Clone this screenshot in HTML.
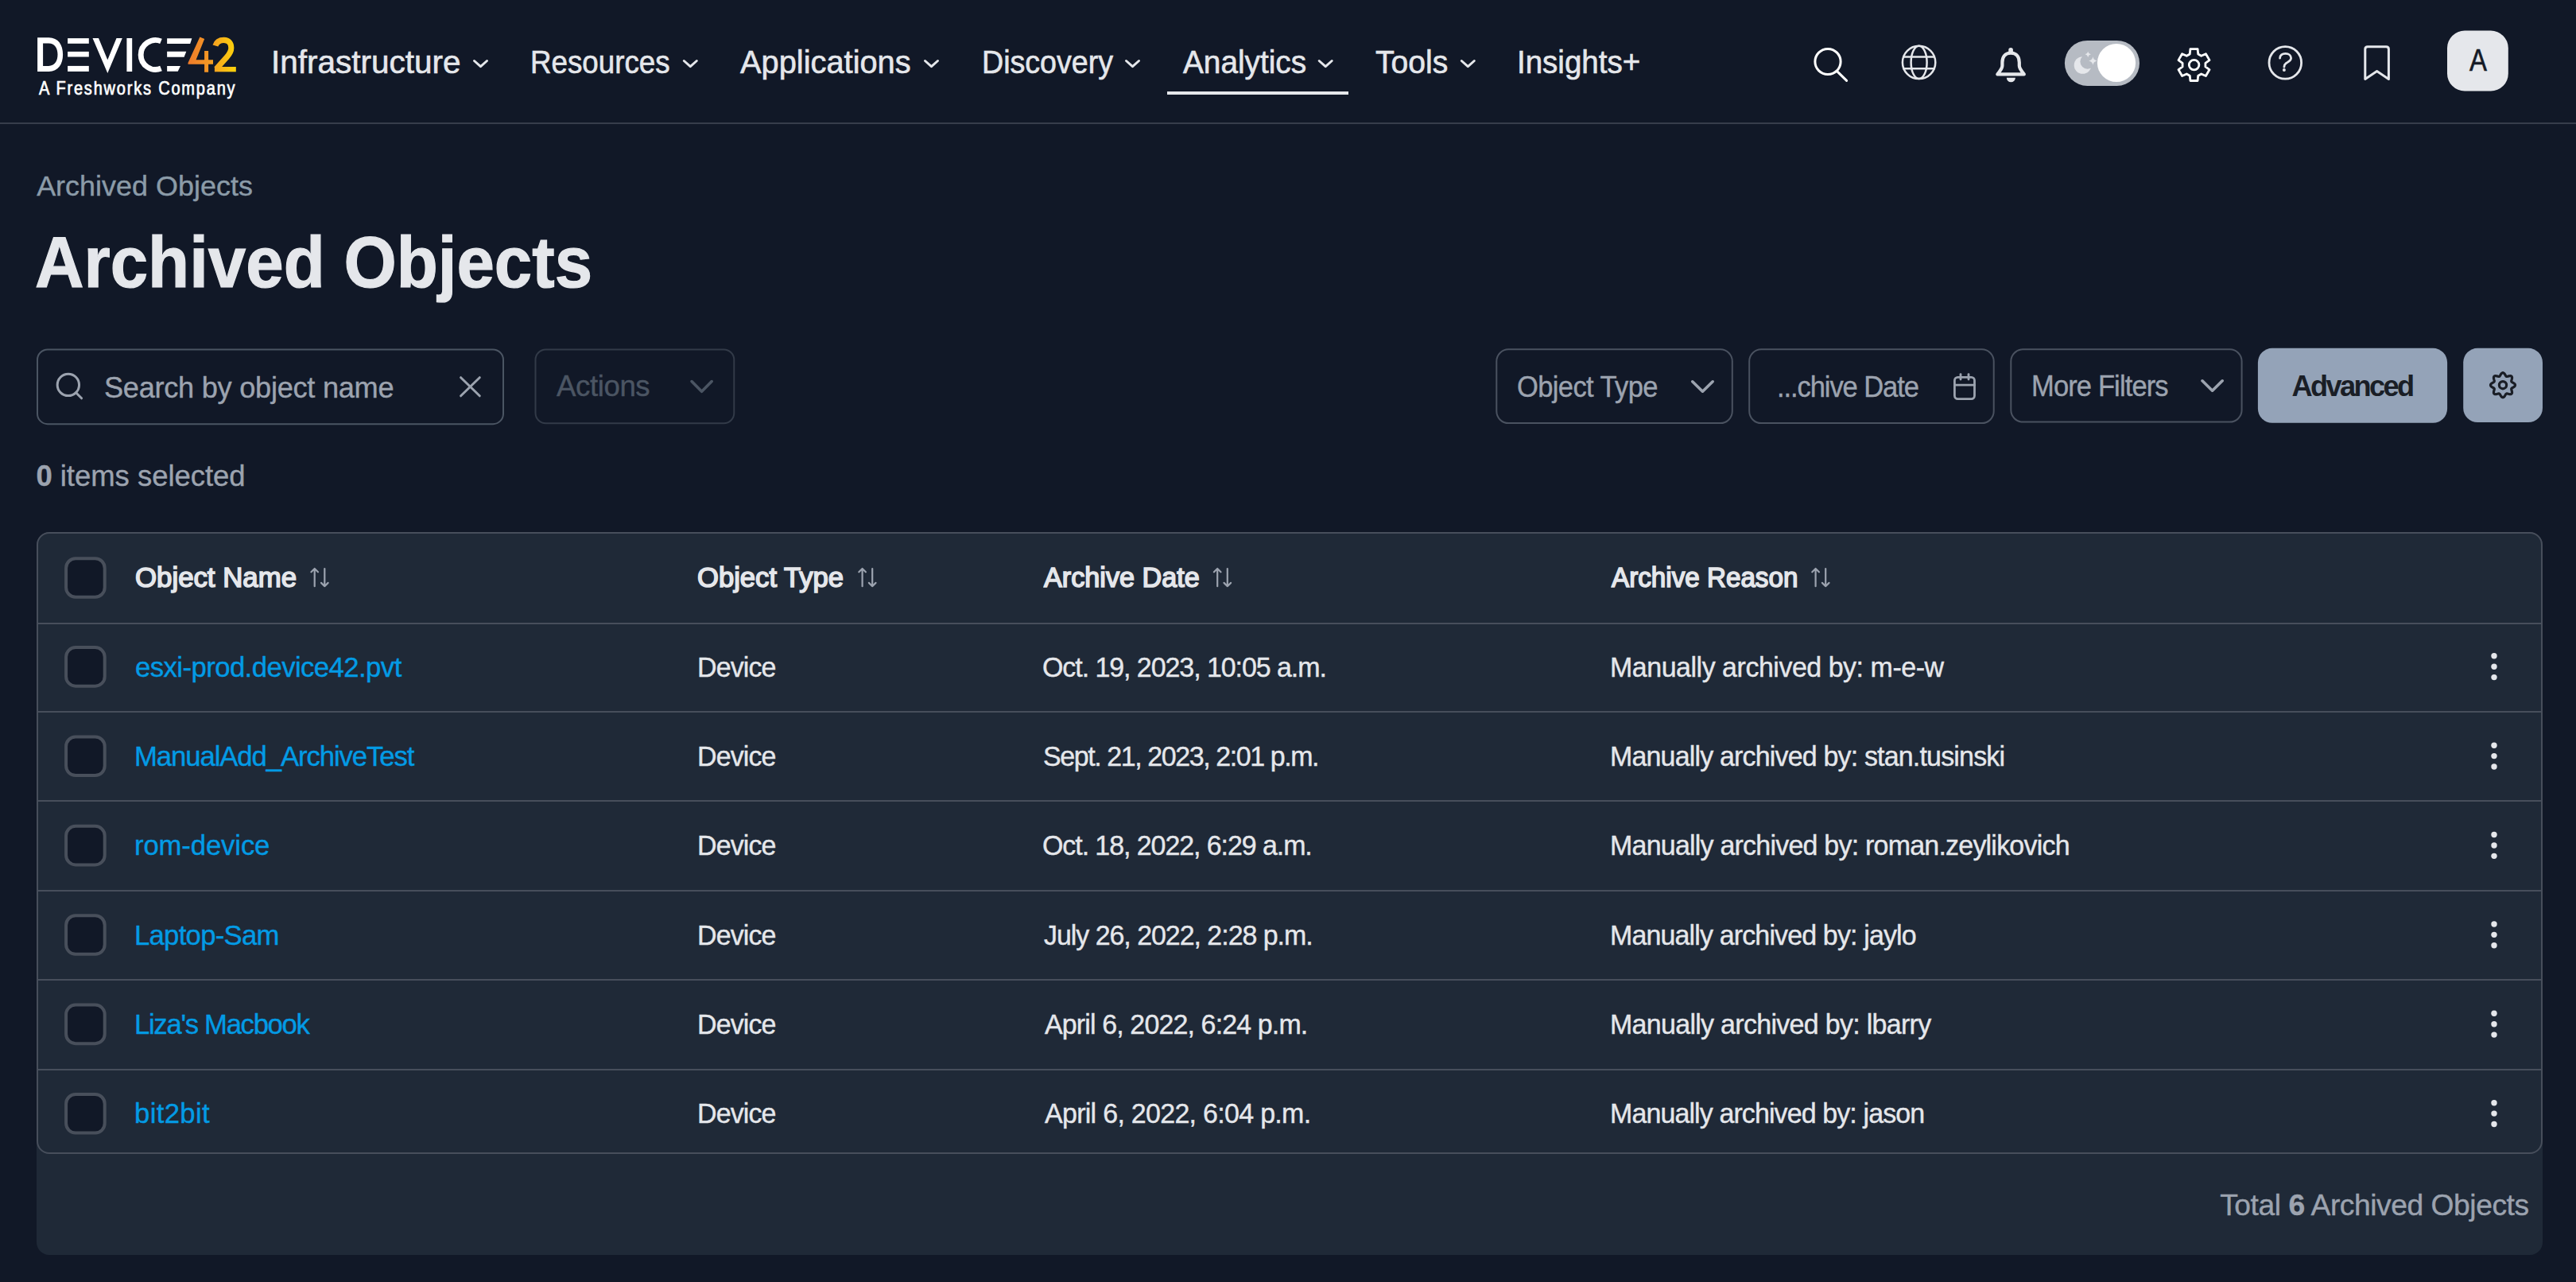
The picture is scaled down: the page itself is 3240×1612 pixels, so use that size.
<!DOCTYPE html>
<html><head><meta charset="utf-8"><title>Archived Objects</title>
<style>
html,body{margin:0;padding:0;background:#111827;width:3240px;height:1612px;overflow:hidden;}
.bg{position:absolute;left:0;top:0;}
.t{position:absolute;white-space:nowrap;font-family:"Liberation Sans",sans-serif;}
b{font-weight:700;}
</style></head><body>
<svg class="bg" width="3240" height="1612" viewBox="0 0 3240 1612"><rect x="0" y="154" width="3240" height="2" fill="#373d4b"/><rect x="1468" y="115" width="228" height="4" fill="#e5e7eb"/><g fill="#ffffff"><path fill-rule="evenodd" d="M47.1,47.3 H61.5 C73.2,47.3 79.1,56.5 79.1,68.6 C79.1,80.8 73.2,90 61.5,90 H47.1 Z M54.1,54.4 V82.9 H61.2 C68.6,82.9 72.5,77 72.5,68.6 C72.5,60.3 68.6,54.4 61.2,54.4 Z"/><rect x="85.1" y="48.1" width="26.7" height="6.7"/><rect x="85.1" y="64.9" width="26.7" height="6.6"/><rect x="85.1" y="82.9" width="26.7" height="7.0"/><polygon points="116.5,48 124,48 135.3,75.3 146.5,48 153.8,48 135.3,92"/><rect x="159.4" y="48" width="6.8" height="42"/><polygon points="210.1,48.2 241.4,48.2 239.2,54.9 210.1,54.9"/><polygon points="210.1,64.7 234.3,64.7 231.6,71.8 210.1,71.8"/><polygon points="210.1,82.9 227,82.9 223.7,89.7 210.1,89.7"/></g><path d="M202.51,51.84 A18.45,18.45 0 1 0 202.51,86.06" fill="none" stroke="#ffffff" stroke-width="6.9"/><defs><linearGradient id="g42" x1="236" y1="0" x2="297" y2="0" gradientUnits="userSpaceOnUse"><stop offset="0" stop-color="#ee7a2a"/><stop offset="0.45" stop-color="#f39824"/><stop offset="1" stop-color="#fdd40a"/></linearGradient></defs><path fill="url(#g42)" d="M251.4,46.5 L257.2,49 L246.5,75.3 L257.1,75.3 L257.1,63.9 L262.1,63.9 L262.1,75.3 L268,75.3 L268,80.8 L262.1,80.8 L262.1,90.8 L257.1,90.8 L257.1,80.8 L236.5,80.8 L236.5,79 Z"/><path fill="none" stroke="url(#g42)" stroke-width="7.1" d="M270.9,57.6 C272.7,51.6 276.9,50.4 281.6,50.4 C287.6,50.4 290.8,54.6 290.8,60.3 C290.8,64.6 289,67.6 285.4,71.6 L272,86.6"/><rect x="269.9" y="84" width="26.9" height="6.3" fill="url(#g42)"/><polyline points="596.50,76.50 604.50,83.70 612.50,76.50" fill="none" stroke="#e5e7eb" stroke-width="3" stroke-linecap="round" stroke-linejoin="round"/><polyline points="860.30,76.50 868.30,83.70 876.30,76.50" fill="none" stroke="#e5e7eb" stroke-width="3" stroke-linecap="round" stroke-linejoin="round"/><polyline points="1163.50,76.50 1171.50,83.70 1179.50,76.50" fill="none" stroke="#e5e7eb" stroke-width="3" stroke-linecap="round" stroke-linejoin="round"/><polyline points="1416.50,76.50 1424.50,83.70 1432.50,76.50" fill="none" stroke="#e5e7eb" stroke-width="3" stroke-linecap="round" stroke-linejoin="round"/><polyline points="1659.20,76.50 1667.20,83.70 1675.20,76.50" fill="none" stroke="#e5e7eb" stroke-width="3" stroke-linecap="round" stroke-linejoin="round"/><polyline points="1838.30,76.50 1846.30,83.70 1854.30,76.50" fill="none" stroke="#e5e7eb" stroke-width="3" stroke-linecap="round" stroke-linejoin="round"/><circle cx="2299" cy="77.5" r="16.1" fill="none" stroke="#ffffff" stroke-width="3"/><line x1="2310.6" y1="89.6" x2="2322.6" y2="101.4" stroke="#ffffff" stroke-width="3" stroke-linecap="round"/><g fill="none" stroke="#e5e7eb" stroke-width="2.5"><circle cx="2413.6" cy="78.4" r="20.7"/><ellipse cx="2413.6" cy="78.4" rx="10" ry="20.7"/><line x1="2393.5" y1="71.4" x2="2433.7" y2="71.4"/><line x1="2393.5" y1="86.2" x2="2433.7" y2="86.2"/></g><path d="M2529.1,66.6 C2521.3,66.6 2518.4,72.5 2518.4,78.5 L2518.4,82.5 C2518.4,86.8 2514.5,90 2512.4,93.4 L2545.8,93.4 C2543.7,90 2539.8,86.8 2539.8,82.5 L2539.8,78.5 C2539.8,72.5 2536.9,66.6 2529.1,66.6 Z" fill="none" stroke="#e5e7eb" stroke-width="4.2" stroke-linejoin="round"/><rect x="2526.3" y="60" width="5.6" height="7" rx="2.8" fill="#e5e7eb"/><path d="M2523.8,97.8 H2534.9 A5.55,5.55 0 0 1 2523.8,97.8 Z" fill="#e5e7eb"/><rect x="2596.9" y="50.9" width="94.1" height="57" rx="28.5" fill="#b6bbc3"/><circle cx="2619.5" cy="82" r="10.8" fill="#e5e7eb"/><circle cx="2625.6" cy="77.6" r="9.2" fill="#b6bbc3"/><path d="M2626.2,64.7 Q2626.776,67.724 2629.7999999999997,68.3 Q2626.776,68.87599999999999 2626.2,71.89999999999999 Q2625.624,68.87599999999999 2622.6,68.3 Q2625.624,67.724 2626.2,64.7 Z" fill="#e5e7eb"/><path d="M2632.4,71.3 Q2633.232,75.668 2637.6,76.5 Q2633.232,77.332 2632.4,81.7 Q2631.568,77.332 2627.2000000000003,76.5 Q2631.568,75.668 2632.4,71.3 Z" fill="#e5e7eb"/><circle cx="2662" cy="79" r="24.1" fill="#ffffff"/><path d="M2754.27,67.97 L2754.91,61.72 L2764.09,61.72 L2764.73,67.97 L2768.69,70.25 L2774.42,67.69 L2779.01,75.64 L2773.92,79.32 L2773.92,83.88 L2779.01,87.56 L2774.42,95.51 L2768.69,92.95 L2764.73,95.23 L2764.09,101.48 L2754.91,101.48 L2754.27,95.23 L2750.31,92.95 L2744.58,95.51 L2739.99,87.56 L2745.08,83.88 L2745.08,79.32 L2739.99,75.64 L2744.58,67.69 L2750.31,70.25 Z" fill="none" stroke="#ffffff" stroke-width="2.8" stroke-linejoin="round"/><circle cx="2759.6" cy="81.6" r="6.3" fill="none" stroke="#ffffff" stroke-width="2.8"/><circle cx="2874.3" cy="78.9" r="20.3" fill="none" stroke="#e5e7eb" stroke-width="2.8"/><path d="M2867.6,73.2 C2867.3,69.3 2870.6,67.3 2874.6,67.3 C2878.8,67.3 2881.6,69.8 2881.6,73 C2881.6,76.6 2877.6,77.8 2875.2,79.6 C2873.6,80.8 2872.9,82.2 2872.9,84.2" fill="none" stroke="#e5e7eb" stroke-width="2.8" stroke-linecap="round"/><circle cx="2872.9" cy="88" r="2" fill="#e5e7eb"/><path d="M2974.8,99.4 V61.8 Q2974.8,58.7 2977.9,58.7 H3001.3 Q3004.4,58.7 3004.4,61.8 V99.4 L2989.6,89.6 Z" fill="none" stroke="#e5e7eb" stroke-width="3" stroke-linejoin="round"/><rect x="3078" y="38.5" width="76.8" height="76" rx="22" fill="#e5e7eb"/><rect x="47.00" y="439.50" width="586.00" height="93.70" rx="13.00" fill="#111827" stroke="#4b5563" stroke-width="2"/><circle cx="85.85" cy="483.9" r="13.7" fill="none" stroke="#9ca3af" stroke-width="3"/><line x1="95.6" y1="493.7" x2="102.6" y2="500.8" stroke="#9ca3af" stroke-width="3" stroke-linecap="round"/><g stroke="#9ca3af" stroke-width="3" stroke-linecap="round"><line x1="579.6" y1="474.7" x2="603.3" y2="497.8"/><line x1="603.3" y1="474.7" x2="579.6" y2="497.8"/></g><rect x="673.50" y="439.50" width="249.80" height="92.80" rx="13.00" fill="#111827" stroke="#323a48" stroke-width="2"/><polyline points="870.00,479.60 882.60,492.30 895.20,479.60" fill="none" stroke="#4b5563" stroke-width="3.6" stroke-linecap="round" stroke-linejoin="round"/><rect x="1882.30" y="439.30" width="296.50" height="92.80" rx="15.00" fill="#111827" stroke="#4a5260" stroke-width="2"/><polyline points="2128.70,479.80 2141.45,492.20 2154.20,479.80" fill="none" stroke="#9ca3af" stroke-width="3.6" stroke-linecap="round" stroke-linejoin="round"/><rect x="2200.20" y="439.30" width="307.50" height="92.80" rx="15.00" fill="#111827" stroke="#4a5260" stroke-width="2"/><g fill="none" stroke="#9ca3af" stroke-width="2.8" stroke-linecap="round"><rect x="2458.4" y="474.4" width="25.1" height="27.2" rx="4"/><line x1="2458.4" y1="484.2" x2="2483.5" y2="484.2"/><line x1="2466" y1="470.6" x2="2466" y2="477"/><line x1="2476" y1="470.6" x2="2476" y2="477"/></g><rect x="2529.30" y="439.30" width="290.30" height="91.30" rx="15.00" fill="#111827" stroke="#4a5260" stroke-width="2"/><polyline points="2770.00,478.80 2782.60,491.20 2795.20,478.80" fill="none" stroke="#9ca3af" stroke-width="3.6" stroke-linecap="round" stroke-linejoin="round"/><rect x="2839.9" y="437.8" width="238.2" height="94" rx="18" fill="#94a3b8"/><rect x="3098.2" y="437.8" width="99.8" height="93.2" rx="18" fill="#94a3b8"/><path d="M3163.50,484.20 L3163.40,484.80 L3163.09,485.39 L3162.61,485.93 L3162.01,486.42 L3161.34,486.85 L3160.65,487.24 L3160.01,487.59 L3159.47,487.93 L3159.06,488.28 L3158.81,488.68 L3158.71,489.14 L3158.75,489.68 L3158.89,490.30 L3159.10,491.00 L3159.31,491.76 L3159.48,492.54 L3159.56,493.31 L3159.51,494.03 L3159.31,494.66 L3158.96,495.16 L3158.46,495.51 L3157.83,495.71 L3157.11,495.76 L3156.34,495.68 L3155.56,495.51 L3154.80,495.30 L3154.10,495.09 L3153.48,494.95 L3152.94,494.91 L3152.48,495.01 L3152.08,495.26 L3151.73,495.67 L3151.39,496.21 L3151.04,496.85 L3150.65,497.54 L3150.22,498.21 L3149.73,498.81 L3149.19,499.29 L3148.60,499.60 L3148.00,499.70 L3147.40,499.60 L3146.81,499.29 L3146.27,498.81 L3145.78,498.21 L3145.35,497.54 L3144.96,496.85 L3144.61,496.21 L3144.27,495.67 L3143.92,495.26 L3143.52,495.01 L3143.06,494.91 L3142.52,494.95 L3141.90,495.09 L3141.20,495.30 L3140.44,495.51 L3139.66,495.68 L3138.89,495.76 L3138.17,495.71 L3137.54,495.51 L3137.04,495.16 L3136.69,494.66 L3136.49,494.03 L3136.44,493.31 L3136.52,492.54 L3136.69,491.76 L3136.90,491.00 L3137.11,490.30 L3137.25,489.68 L3137.29,489.14 L3137.19,488.68 L3136.94,488.28 L3136.53,487.93 L3135.99,487.59 L3135.35,487.24 L3134.66,486.85 L3133.99,486.42 L3133.39,485.93 L3132.91,485.39 L3132.60,484.80 L3132.50,484.20 L3132.60,483.60 L3132.91,483.01 L3133.39,482.47 L3133.99,481.98 L3134.66,481.55 L3135.35,481.16 L3135.99,480.81 L3136.53,480.47 L3136.94,480.12 L3137.19,479.72 L3137.29,479.26 L3137.25,478.72 L3137.11,478.10 L3136.90,477.40 L3136.69,476.64 L3136.52,475.86 L3136.44,475.09 L3136.49,474.37 L3136.69,473.74 L3137.04,473.24 L3137.54,472.89 L3138.17,472.69 L3138.89,472.64 L3139.66,472.72 L3140.44,472.89 L3141.20,473.10 L3141.90,473.31 L3142.52,473.45 L3143.06,473.49 L3143.52,473.39 L3143.92,473.14 L3144.27,472.73 L3144.61,472.19 L3144.96,471.55 L3145.35,470.86 L3145.78,470.19 L3146.27,469.59 L3146.81,469.11 L3147.40,468.80 L3148.00,468.70 L3148.60,468.80 L3149.19,469.11 L3149.73,469.59 L3150.22,470.19 L3150.65,470.86 L3151.04,471.55 L3151.39,472.19 L3151.73,472.73 L3152.08,473.14 L3152.48,473.39 L3152.94,473.49 L3153.48,473.45 L3154.10,473.31 L3154.80,473.10 L3155.56,472.89 L3156.34,472.72 L3157.11,472.64 L3157.83,472.69 L3158.46,472.89 L3158.96,473.24 L3159.31,473.74 L3159.51,474.37 L3159.56,475.09 L3159.48,475.86 L3159.31,476.64 L3159.10,477.40 L3158.89,478.10 L3158.75,478.72 L3158.71,479.26 L3158.81,479.72 L3159.06,480.12 L3159.47,480.47 L3160.01,480.81 L3160.65,481.16 L3161.34,481.55 L3162.01,481.98 L3162.61,482.47 L3163.09,483.01 L3163.40,483.60 Z" fill="none" stroke="#1a1e26" stroke-width="3.2" stroke-linejoin="round"/><circle cx="3148" cy="484.2" r="4.6" fill="none" stroke="#1a1e26" stroke-width="3.2"/><rect x="46" y="669" width="3152" height="909" rx="16" fill="#1f2937"/><rect x="47.00" y="670.00" width="3150.00" height="780.00" rx="15.00" fill="none" stroke="#474e5b" stroke-width="2"/><rect x="48" y="783" width="3148" height="2" fill="#474e5b"/><rect x="48" y="894" width="3148" height="2" fill="#474e5b"/><rect x="48" y="1006" width="3148" height="2" fill="#474e5b"/><rect x="48" y="1119" width="3148" height="2" fill="#474e5b"/><rect x="48" y="1231" width="3148" height="2" fill="#474e5b"/><rect x="48" y="1344" width="3148" height="2" fill="#474e5b"/><rect x="83.10" y="702.20" width="48.60" height="48.60" rx="12.00" fill="#111827" stroke="#484f5b" stroke-width="4"/><rect x="83.10" y="814.10" width="48.60" height="48.60" rx="12.00" fill="#111827" stroke="#484f5b" stroke-width="4"/><rect x="83.10" y="926.48" width="48.60" height="48.60" rx="12.00" fill="#111827" stroke="#484f5b" stroke-width="4"/><rect x="83.10" y="1038.86" width="48.60" height="48.60" rx="12.00" fill="#111827" stroke="#484f5b" stroke-width="4"/><rect x="83.10" y="1151.24" width="48.60" height="48.60" rx="12.00" fill="#111827" stroke="#484f5b" stroke-width="4"/><rect x="83.10" y="1263.62" width="48.60" height="48.60" rx="12.00" fill="#111827" stroke="#484f5b" stroke-width="4"/><rect x="83.10" y="1376.00" width="48.60" height="48.60" rx="12.00" fill="#111827" stroke="#484f5b" stroke-width="4"/><g fill="none" stroke="#9ca3af" stroke-width="2.2" stroke-linecap="round" stroke-linejoin="round"><path d="M395.7,737.2 V715.0 M391.4,719.3 L395.7,715.0 L400.0,719.3"/><path d="M408.3,715.0 V737.2 M404.0,732.9 L408.3,737.2 L412.6,732.9"/></g><g fill="none" stroke="#9ca3af" stroke-width="2.2" stroke-linecap="round" stroke-linejoin="round"><path d="M1084.6,737.2 V715.0 M1080.3,719.3 L1084.6,715.0 L1088.9,719.3"/><path d="M1097.2,715.0 V737.2 M1092.9,732.9 L1097.2,737.2 L1101.5,732.9"/></g><g fill="none" stroke="#9ca3af" stroke-width="2.2" stroke-linecap="round" stroke-linejoin="round"><path d="M1531.2,737.2 V715.0 M1526.9,719.3 L1531.2,715.0 L1535.5,719.3"/><path d="M1543.8,715.0 V737.2 M1539.5,732.9 L1543.8,737.2 L1548.1,732.9"/></g><g fill="none" stroke="#9ca3af" stroke-width="2.2" stroke-linecap="round" stroke-linejoin="round"><path d="M2283.6,737.2 V715.0 M2279.3,719.3 L2283.6,715.0 L2287.9,719.3"/><path d="M2296.2,715.0 V737.2 M2291.9,732.9 L2296.2,737.2 L2300.5,732.9"/></g><circle cx="3137" cy="824.80" r="3.7" fill="#e5e7eb"/><circle cx="3137" cy="838.20" r="3.7" fill="#e5e7eb"/><circle cx="3137" cy="851.60" r="3.7" fill="#e5e7eb"/><circle cx="3137" cy="937.18" r="3.7" fill="#e5e7eb"/><circle cx="3137" cy="950.58" r="3.7" fill="#e5e7eb"/><circle cx="3137" cy="963.98" r="3.7" fill="#e5e7eb"/><circle cx="3137" cy="1049.56" r="3.7" fill="#e5e7eb"/><circle cx="3137" cy="1062.96" r="3.7" fill="#e5e7eb"/><circle cx="3137" cy="1076.36" r="3.7" fill="#e5e7eb"/><circle cx="3137" cy="1161.94" r="3.7" fill="#e5e7eb"/><circle cx="3137" cy="1175.34" r="3.7" fill="#e5e7eb"/><circle cx="3137" cy="1188.74" r="3.7" fill="#e5e7eb"/><circle cx="3137" cy="1274.32" r="3.7" fill="#e5e7eb"/><circle cx="3137" cy="1287.72" r="3.7" fill="#e5e7eb"/><circle cx="3137" cy="1301.12" r="3.7" fill="#e5e7eb"/><circle cx="3137" cy="1386.70" r="3.7" fill="#e5e7eb"/><circle cx="3137" cy="1400.10" r="3.7" fill="#e5e7eb"/><circle cx="3137" cy="1413.50" r="3.7" fill="#e5e7eb"/></svg>
<div id="n1" class="t" style="left:340.51px;top:59.24px;font-size:40.12px;line-height:40.12px;letter-spacing:0.000px;color:#e5e7eb;-webkit-text-stroke:0.6px #e5e7eb;transform:scaleX(1.0095);transform-origin:0 0;">Infrastructure</div>
<div id="n2" class="t" style="left:667.31px;top:59.24px;font-size:40.12px;line-height:40.12px;letter-spacing:0.000px;color:#e5e7eb;-webkit-text-stroke:0.6px #e5e7eb;transform:scaleX(0.9160);transform-origin:0 0;">Resources</div>
<div id="n3" class="t" style="left:930.72px;top:59.24px;font-size:40.12px;line-height:40.12px;letter-spacing:0.000px;color:#e5e7eb;-webkit-text-stroke:0.6px #e5e7eb;transform:scaleX(0.9926);transform-origin:0 0;">Applications</div>
<div id="n4" class="t" style="left:1234.71px;top:59.24px;font-size:40.12px;line-height:40.12px;letter-spacing:0.000px;color:#e5e7eb;-webkit-text-stroke:0.6px #e5e7eb;transform:scaleX(0.9376);transform-origin:0 0;">Discovery</div>
<div id="n5" class="t" style="left:1488.12px;top:59.24px;font-size:40.12px;line-height:40.12px;letter-spacing:0.000px;color:#e5e7eb;-webkit-text-stroke:0.6px #e5e7eb;transform:scaleX(0.9664);transform-origin:0 0;">Analytics</div>
<div id="n6" class="t" style="left:1729.92px;top:59.24px;font-size:40.12px;line-height:40.12px;letter-spacing:0.000px;color:#e5e7eb;-webkit-text-stroke:0.6px #e5e7eb;transform:scaleX(0.9744);transform-origin:0 0;">Tools</div>
<div id="n7" class="t" style="left:1908.11px;top:59.24px;font-size:40.12px;line-height:40.12px;letter-spacing:0.000px;color:#e5e7eb;-webkit-text-stroke:0.6px #e5e7eb;transform:scaleX(0.9596);transform-origin:0 0;">Insights+</div>
<div id="logo2" class="t" style="left:48.95px;top:100.01px;font-size:23.26px;line-height:23.26px;letter-spacing:2.103px;color:#ffffff;font-weight:500;-webkit-text-stroke:0.7px #ffffff;transform:scaleX(0.8600);transform-origin:0 0;">A Freshworks Company</div>
<div id="bc" class="t" style="left:46.13px;top:216.61px;font-size:35.90px;line-height:35.90px;letter-spacing:0.028px;color:#8b9ba8;-webkit-text-stroke:0.4px #8b9ba8;">Archived Objects</div>
<div id="title" class="t" style="left:44.35px;top:283.73px;font-size:91.28px;line-height:91.28px;letter-spacing:0.000px;color:#e5e7eb;font-weight:700;-webkit-text-stroke:1.2px #e5e7eb;transform:scaleX(0.9339);transform-origin:0 0;">Archived Objects</div>
<div id="search" class="t" style="left:130.94px;top:469.56px;font-size:36.19px;line-height:36.19px;letter-spacing:-0.266px;color:#9ca3af;-webkit-text-stroke:0.4px #9ca3af;">Search by object name</div>
<div id="actions" class="t" style="left:699.93px;top:468.19px;font-size:36.63px;line-height:36.63px;letter-spacing:-0.391px;color:#4b5563;-webkit-text-stroke:0.4px #4b5563;">Actions</div>
<div id="sel" class="t" style="left:45.41px;top:581.32px;font-size:36.48px;line-height:36.48px;letter-spacing:-0.020px;color:#9ca3af;-webkit-text-stroke:0.4px #9ca3af;"><b>0</b> items selected</div>
<div id="f1" class="t" style="left:1908.26px;top:468.54px;font-size:36.34px;line-height:36.34px;letter-spacing:-0.645px;color:#9ca3af;-webkit-text-stroke:0.4px #9ca3af;transform:scaleX(0.9500);transform-origin:0 0;">Object Type</div>
<div id="f2" class="t" style="left:2235.26px;top:468.54px;font-size:36.34px;line-height:36.34px;letter-spacing:-1.135px;color:#9ca3af;-webkit-text-stroke:0.4px #9ca3af;transform:scaleX(0.9500);transform-origin:0 0;">...chive Date</div>
<div id="f3" class="t" style="left:2555.02px;top:468.34px;font-size:36.34px;line-height:36.34px;letter-spacing:-0.914px;color:#9ca3af;-webkit-text-stroke:0.4px #9ca3af;transform:scaleX(0.9500);transform-origin:0 0;">More Filters</div>
<div id="adv" class="t" style="left:2882.46px;top:467.76px;font-size:36.19px;line-height:36.19px;letter-spacing:-2.614px;color:#1a1e26;font-weight:700;">Advanced</div>
<div id="avatar" class="t" style="left:3105.92px;top:55.78px;font-size:39.24px;line-height:39.24px;letter-spacing:-11.905px;color:#141a26;-webkit-text-stroke:0.6px #141a26;transform:scaleX(0.8400);transform-origin:0 0;">A</div>
<div id="h1" class="t" style="left:170.34px;top:709.36px;font-size:34.30px;line-height:34.30px;letter-spacing:0.000px;color:#e5e7eb;-webkit-text-stroke:1.6px #e5e7eb;transform:scaleX(1.0142);transform-origin:0 0;">Object Name</div>
<div id="h2" class="t" style="left:877.14px;top:709.36px;font-size:34.30px;line-height:34.30px;letter-spacing:0.000px;color:#e5e7eb;-webkit-text-stroke:1.6px #e5e7eb;transform:scaleX(1.0091);transform-origin:0 0;">Object Type</div>
<div id="h3" class="t" style="left:1312.85px;top:709.36px;font-size:34.30px;line-height:34.30px;letter-spacing:0.000px;color:#e5e7eb;-webkit-text-stroke:1.6px #e5e7eb;transform:scaleX(0.9974);transform-origin:0 0;">Archive Date</div>
<div id="h4" class="t" style="left:2027.05px;top:709.36px;font-size:34.30px;line-height:34.30px;letter-spacing:0.000px;color:#e5e7eb;-webkit-text-stroke:1.6px #e5e7eb;transform:scaleX(0.9681);transform-origin:0 0;">Archive Reason</div>
<div id="r0a" class="t" style="left:169.50px;top:821.53px;font-size:35.76px;line-height:35.76px;letter-spacing:-0.574px;color:#039be5;-webkit-text-stroke:0.4px #039be5;transform:scaleX(0.9700);transform-origin:0 0;">esxi-prod.device42.pvt</div>
<div id="r0b" class="t" style="left:876.67px;top:821.53px;font-size:35.76px;line-height:35.76px;letter-spacing:-0.911px;color:#e5e7eb;-webkit-text-stroke:0.4px #e5e7eb;transform:scaleX(0.9500);transform-origin:0 0;">Device</div>
<div id="r0c" class="t" style="left:1311.48px;top:821.53px;font-size:35.76px;line-height:35.76px;letter-spacing:-1.115px;color:#e5e7eb;-webkit-text-stroke:0.4px #e5e7eb;transform:scaleX(0.9500);transform-origin:0 0;">Oct. 19, 2023, 10:05 a.m.</div>
<div id="r0d" class="t" style="left:2025.47px;top:821.53px;font-size:35.76px;line-height:35.76px;letter-spacing:-0.495px;color:#e5e7eb;-webkit-text-stroke:0.4px #e5e7eb;transform:scaleX(0.9500);transform-origin:0 0;">Manually archived by: m-e-w</div>
<div id="r1a" class="t" style="left:169.07px;top:933.91px;font-size:35.76px;line-height:35.76px;letter-spacing:-1.112px;color:#039be5;-webkit-text-stroke:0.4px #039be5;transform:scaleX(0.9700);transform-origin:0 0;">ManualAdd_ArchiveTest</div>
<div id="r1b" class="t" style="left:876.67px;top:933.91px;font-size:35.76px;line-height:35.76px;letter-spacing:-0.911px;color:#e5e7eb;-webkit-text-stroke:0.4px #e5e7eb;transform:scaleX(0.9500);transform-origin:0 0;">Device</div>
<div id="r1c" class="t" style="left:1311.56px;top:933.91px;font-size:35.76px;line-height:35.76px;letter-spacing:-1.487px;color:#e5e7eb;-webkit-text-stroke:0.4px #e5e7eb;transform:scaleX(0.9500);transform-origin:0 0;">Sept. 21, 2023, 2:01 p.m.</div>
<div id="r1d" class="t" style="left:2025.47px;top:933.91px;font-size:35.76px;line-height:35.76px;letter-spacing:-0.860px;color:#e5e7eb;-webkit-text-stroke:0.4px #e5e7eb;transform:scaleX(0.9500);transform-origin:0 0;">Manually archived by: stan.tusinski</div>
<div id="r2a" class="t" style="left:168.64px;top:1046.29px;font-size:35.76px;line-height:35.76px;letter-spacing:-0.126px;color:#039be5;-webkit-text-stroke:0.4px #039be5;transform:scaleX(0.9700);transform-origin:0 0;">rom-device</div>
<div id="r2b" class="t" style="left:876.67px;top:1046.29px;font-size:35.76px;line-height:35.76px;letter-spacing:-0.911px;color:#e5e7eb;-webkit-text-stroke:0.4px #e5e7eb;transform:scaleX(0.9500);transform-origin:0 0;">Device</div>
<div id="r2c" class="t" style="left:1311.48px;top:1046.29px;font-size:35.76px;line-height:35.76px;letter-spacing:-1.124px;color:#e5e7eb;-webkit-text-stroke:0.4px #e5e7eb;transform:scaleX(0.9500);transform-origin:0 0;">Oct. 18, 2022, 6:29 a.m.</div>
<div id="r2d" class="t" style="left:2025.47px;top:1046.29px;font-size:35.76px;line-height:35.76px;letter-spacing:-0.810px;color:#e5e7eb;-webkit-text-stroke:0.4px #e5e7eb;transform:scaleX(0.9500);transform-origin:0 0;">Manually archived by: roman.zeylikovich</div>
<div id="r3a" class="t" style="left:169.07px;top:1158.67px;font-size:35.76px;line-height:35.76px;letter-spacing:-0.747px;color:#039be5;-webkit-text-stroke:0.4px #039be5;transform:scaleX(0.9700);transform-origin:0 0;">Laptop-Sam</div>
<div id="r3b" class="t" style="left:876.67px;top:1158.67px;font-size:35.76px;line-height:35.76px;letter-spacing:-0.911px;color:#e5e7eb;-webkit-text-stroke:0.4px #e5e7eb;transform:scaleX(0.9500);transform-origin:0 0;">Device</div>
<div id="r3c" class="t" style="left:1312.63px;top:1158.67px;font-size:35.76px;line-height:35.76px;letter-spacing:-1.090px;color:#e5e7eb;-webkit-text-stroke:0.4px #e5e7eb;transform:scaleX(0.9500);transform-origin:0 0;">July 26, 2022, 2:28 p.m.</div>
<div id="r3d" class="t" style="left:2025.47px;top:1158.67px;font-size:35.76px;line-height:35.76px;letter-spacing:-0.894px;color:#e5e7eb;-webkit-text-stroke:0.4px #e5e7eb;transform:scaleX(0.9500);transform-origin:0 0;">Manually archived by: jaylo</div>
<div id="r4a" class="t" style="left:169.07px;top:1271.05px;font-size:35.76px;line-height:35.76px;letter-spacing:-1.349px;color:#039be5;-webkit-text-stroke:0.4px #039be5;transform:scaleX(0.9700);transform-origin:0 0;">Liza&#39;s Macbook</div>
<div id="r4b" class="t" style="left:876.67px;top:1271.05px;font-size:35.76px;line-height:35.76px;letter-spacing:-0.911px;color:#e5e7eb;-webkit-text-stroke:0.4px #e5e7eb;transform:scaleX(0.9500);transform-origin:0 0;">Device</div>
<div id="r4c" class="t" style="left:1314.13px;top:1271.05px;font-size:35.76px;line-height:35.76px;letter-spacing:-0.909px;color:#e5e7eb;-webkit-text-stroke:0.4px #e5e7eb;transform:scaleX(0.9500);transform-origin:0 0;">April 6, 2022, 6:24 p.m.</div>
<div id="r4d" class="t" style="left:2025.47px;top:1271.05px;font-size:35.76px;line-height:35.76px;letter-spacing:-0.729px;color:#e5e7eb;-webkit-text-stroke:0.4px #e5e7eb;transform:scaleX(0.9500);transform-origin:0 0;">Manually archived by: lbarry</div>
<div id="r5a" class="t" style="left:168.71px;top:1383.43px;font-size:35.76px;line-height:35.76px;letter-spacing:0.350px;color:#039be5;-webkit-text-stroke:0.4px #039be5;transform:scaleX(0.9700);transform-origin:0 0;">bit2bit</div>
<div id="r5b" class="t" style="left:876.67px;top:1383.43px;font-size:35.76px;line-height:35.76px;letter-spacing:-0.911px;color:#e5e7eb;-webkit-text-stroke:0.4px #e5e7eb;transform:scaleX(0.9500);transform-origin:0 0;">Device</div>
<div id="r5c" class="t" style="left:1314.13px;top:1383.43px;font-size:35.76px;line-height:35.76px;letter-spacing:-0.735px;color:#e5e7eb;-webkit-text-stroke:0.4px #e5e7eb;transform:scaleX(0.9500);transform-origin:0 0;">April 6, 2022, 6:04 p.m.</div>
<div id="r5d" class="t" style="left:2025.47px;top:1383.43px;font-size:35.76px;line-height:35.76px;letter-spacing:-0.930px;color:#e5e7eb;-webkit-text-stroke:0.4px #e5e7eb;transform:scaleX(0.9500);transform-origin:0 0;">Manually archived by: jason</div>
<div id="total" class="t" style="left:2792.18px;top:1497.00px;font-size:37.21px;line-height:37.21px;letter-spacing:-0.444px;color:#9ca3af;-webkit-text-stroke:0.4px #9ca3af;">Total <b>6</b> Archived Objects</div>
</body></html>
